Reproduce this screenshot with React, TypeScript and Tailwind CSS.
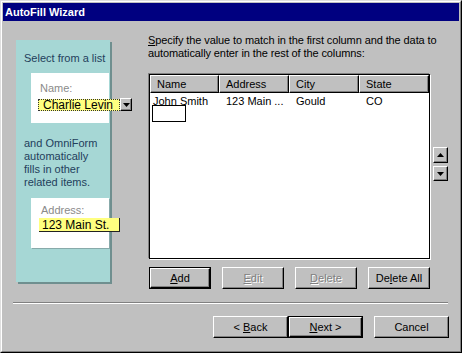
import React from "react";

const F = "font-['Liberation_Sans',Arial,sans-serif]";

function Bevel({ children, className = "" }: { children?: React.ReactNode; className?: string }) {
  return (
    <div
      className={`flex items-center justify-center bg-[#c0c0c0] border border-t-white border-l-white border-r-black border-b-black shadow-[inset_-1px_-1px_0_#808080] ${className}`}
    >
      {children}
    </div>
  );
}

function Btn({
  children,
  w,
  def,
  disabled,
}: {
  children: React.ReactNode;
  w: string;
  def?: boolean;
  disabled?: boolean;
}) {
  const txt = disabled ? "text-[#808080] [text-shadow:1px_1px_0_#fff]" : "text-black";
  if (def) {
    return (
      <div className={`${w} h-[22px] border border-black flex`}>
        <Bevel className={`flex-1 text-[11px] ${txt}`}>{children}</Bevel>
      </div>
    );
  }
  return <Bevel className={`${w} h-[22px] text-[11px] ${txt}`}>{children}</Bevel>;
}

function Tri({ up }: { up?: boolean }) {
  return (
    <svg width="7" height="4" viewBox="0 0 7 4">
      {up ? <polygon points="0,4 7,4 3.5,0" fill="#000" /> : <polygon points="0,0 7,0 3.5,4" fill="#000" />}
    </svg>
  );
}

export default function App() {
  return (
    <div className={`${F} w-[462px] h-[353px] bg-[#c0c0c0] border border-t-[#dfdfdf] border-l-[#dfdfdf] border-r-black border-b-black`}>
      <div className="w-full h-full border border-t-white border-l-white border-r-[#808080] border-b-[#808080] p-[1px] flex flex-col">
        {/* title bar */}
        <div className="h-[18px] bg-[#000080] flex items-center pl-[2px] shrink-0">
          <span className="text-white font-bold text-[11px] leading-none">AutoFill Wizard</span>
        </div>

        {/* body */}
        <div className="flex-1 flex flex-col">
          <div className="flex pt-[13px] pl-[13px]">
            {/* left illustration panel */}
            <div className="mt-[6px] w-[94px] h-[242px] bg-[#a6d7d5] shadow-[2px_2px_0_#6f8f8f] pt-[12px] pl-[8px] text-[11px] leading-[13px] text-[#23405c] shrink-0">
              <div>Select from a list</div>
              <div className="mt-[8px] ml-[7px] w-[78px] h-[50px] bg-white pt-[9px]">
                <div className="pl-[9px] text-[#8a8a8a]">Name:</div>
                <div className="mt-[3px] ml-[7px] flex items-center w-[94px]">
                  <div className="shrink-0 w-[82px] h-[12px] bg-[#ffff80] border border-dotted border-[#333] text-black text-[12px] leading-[10px] pl-[4px] whitespace-nowrap">
                    Charlie Levin
                  </div>
                  <Bevel className="shrink-0 w-[12px] h-[13px]">
                    <Tri />
                  </Bevel>
                </div>
              </div>
              <div className="mt-[14px]">
                and OmniForm
                <br />
                automatically
                <br />
                fills in other
                <br />
                related items.
              </div>
              <div className="mt-[9px] ml-[7px] w-[78px] h-[50px] bg-white pt-[6px] shadow-[1px_1px_0_#8aa]">
                <div className="pl-[10px] text-[#8a8a8a]">Address:</div>
                <div className="mt-[1px] ml-[8px] w-[81px] h-[14px] bg-[#ffff80] border-r border-b border-[#222] text-black text-[12px] leading-[14px] pl-[3px] whitespace-nowrap">
                  123 Main St.
                </div>
              </div>
            </div>

            {/* right side */}
            <div className="ml-[38px] w-[300px] text-[11px] leading-[13px] text-black">
              <div className="tracking-[-0.1px]">
                <span className="underline">S</span>pecify the value to match in the first column and the data to
                <br />
                automatically enter in the rest of the columns:
              </div>
              <div className="flex items-start mt-[14px]">
                <div className="relative ml-[1px] w-[281px] h-[185px] bg-white border border-black shadow-[-1px_-1px_0_#808080,1px_1px_0_#fff]">
                  <div className="flex h-[18px]">
                    {[
                      ["Name", "w-[69px]"],
                      ["Address", "w-[70px]"],
                      ["City", "w-[70px]"],
                      ["State", "w-[70px]"],
                    ].map(([t, w]) => (
                      <Bevel key={t} className={`${w} h-[18px] justify-start pl-[6px]`}>
                        {t}
                      </Bevel>
                    ))}
                  </div>
                  <div className="flex h-[16px] items-center">
                    <div className="w-[69px] pl-[3px]">John Smith</div>
                    <div className="w-[70px] pl-[7px]">123 Main ...</div>
                    <div className="w-[70px] pl-[7px]">Gould</div>
                    <div className="w-[70px] pl-[7px]">CO</div>
                  </div>
                  <div className="absolute left-[2px] top-[30px] w-[34px] h-[17px] bg-white border border-black" />
                </div>
                <div className="ml-[3px] mt-[73px] flex flex-col gap-[3px]">
                  <Bevel className="w-[15px] h-[16px]">
                    <Tri up />
                  </Bevel>
                  <Bevel className="w-[15px] h-[15px]">
                    <Tri />
                  </Bevel>
                </div>
              </div>
              <div className="mt-[8px] ml-[1px] w-[281px] flex justify-between">
                <Btn w="w-[62px]" def>
                  <span>
                    <span className="underline">A</span>dd
                  </span>
                </Btn>
                <Btn w="w-[62px]" disabled>
                  <span>
                    <span className="underline">E</span>dit
                  </span>
                </Btn>
                <Btn w="w-[62px]" disabled>
                  <span>
                    <span className="underline">D</span>elete
                  </span>
                </Btn>
                <Btn w="w-[62px]">
                  <span>
                    De<span className="underline">l</span>ete All
                  </span>
                </Btn>
              </div>
            </div>
          </div>

          {/* separator */}
          <div className="mt-[13px] ml-[10px] w-[435px] h-[2px] border-t border-t-[#808080] border-b border-b-white" />

          {/* bottom buttons */}
          <div className="mt-[12px] flex pl-[210px]">
            <Btn w="w-[75px]">
              <span>
                &lt; <span className="underline">B</span>ack
              </span>
            </Btn>
            <Btn w="w-[75px]" def>
              <span>
                <span className="underline">N</span>ext &gt;
              </span>
            </Btn>
            <div className="ml-[11px]">
              <Btn w="w-[75px]">Cancel</Btn>
            </div>
          </div>
        </div>
      </div>
    </div>
  );
}
